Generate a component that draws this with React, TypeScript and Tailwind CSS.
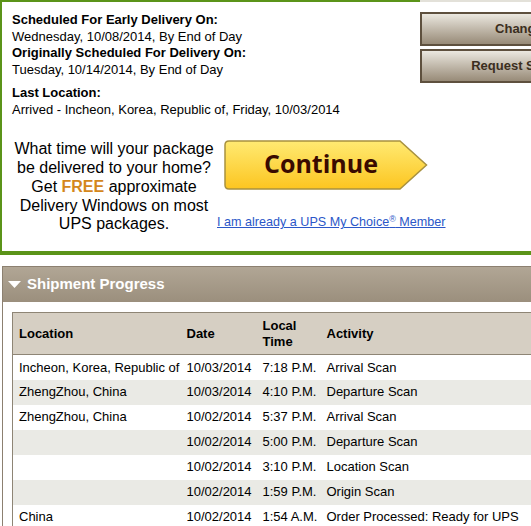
import React from 'react';

const rows = [
  ['Incheon, Korea, Republic of', '10/03/2014', '7:18 P.M.', 'Arrival Scan'],
  ['ZhengZhou, China', '10/03/2014', '4:10 P.M.', 'Departure Scan'],
  ['ZhengZhou, China', '10/02/2014', '5:37 P.M.', 'Arrival Scan'],
  ['', '10/02/2014', '5:00 P.M.', 'Departure Scan'],
  ['', '10/02/2014', '3:10 P.M.', 'Location Scan'],
  ['', '10/02/2014', '1:59 P.M.', 'Origin Scan'],
  ['China', '10/02/2014', '1:54 A.M.', 'Order Processed: Ready for UPS'],
];

const ContinueButton = () => (
  <div className="relative w-[204px] h-[50px]">
    <svg width="204" height="50" viewBox="0 0 204 50" className="absolute inset-0">
      <defs>
        <linearGradient id="cont" x1="0" y1="0" x2="0" y2="1">
          <stop offset="0" stopColor="#ffea72" />
          <stop offset="1" stopColor="#fcc520" />
        </linearGradient>
      </defs>
      <path
        d="M5 1 H176 L202.5 25 L176 49 H5 Q1 49 1 45 V5 Q1 1 5 1 Z"
        fill="url(#cont)"
        stroke="#a8913f"
        strokeWidth="1.5"
      />
    </svg>
    <span className="absolute left-[40px] top-[6px] font-['Open_Sans',sans-serif] font-bold text-[25px] leading-[34px] text-[#3a0a00]">
      Continue
    </span>
  </div>
);

export default function App() {
  return (
    <div className="w-[531px] h-[526px] overflow-hidden bg-white font-['Liberation_Sans',Arial,sans-serif] text-black">
      {/* delivery summary */}
      <div className="w-[600px] border-b-4 border-[#5b9419]">
        <div className="flex">
          <div className="w-[420px] shrink-0 border-t-2 border-l-2 border-[#5b9419] pl-[10px] pt-[10px] pb-[17px]">
            <div className="text-[13px] leading-[16.7px]">
              <div className="font-bold">Scheduled For Early Delivery On:</div>
              <div>Wednesday, 10/08/2014, By End of Day</div>
              <div className="font-bold">Originally Scheduled For Delivery On:</div>
              <div>Tuesday, 10/14/2014, By End of Day</div>
              <div className="font-bold mt-[6px]">Last Location:</div>
              <div>Arrived - Incheon, Korea, Republic of, Friday, 10/03/2014</div>
            </div>

            <div className="flex mt-[22px] -ml-[1px]">
              <div className="w-[206px] shrink-0 text-center text-[16px] leading-[18.8px]">
                What time will your package be delivered to your home? Get{' '}
                <span className="font-bold text-[#d4871c]">FREE</span> approximate Delivery Windows
                on most UPS packages.
              </div>
              <div className="flex flex-col shrink-0">
                <div className="ml-[7px]">
                  <ContinueButton />
                </div>
                <a className="mt-[23px] text-[12.6px] text-[#2b57c8] underline whitespace-nowrap">
                  I am already a UPS My Choice<sup className="text-[9px]">®</sup> Member
                </a>
              </div>
            </div>
          </div>

          <div className="flex-1 border-t-2 border-[#e3e1d9] pt-[10px] flex flex-col gap-[3px]">
            <div className="w-[252px] h-[34px] border-2 border-[#5e503e] bg-linear-to-b from-[#ebe8e0] to-[#988b78] flex items-center justify-center text-[13px] font-bold text-[#3b2e20]">
              Change Delivery
            </div>
            <div className="w-[252px] h-[34px] border-2 border-[#5e503e] bg-linear-to-b from-[#ebe8e0] to-[#988b78] flex items-center justify-center text-[13px] font-bold text-[#3b2e20]">
              Request Status Updates
            </div>
          </div>
        </div>
      </div>

      {/* shipment progress */}
      <div className="mt-[11px] ml-[2px] w-[600px] border-l border-t border-[#8c8070]">
        <div className="h-[35px] bg-linear-to-b from-[#b1a695] to-[#9b8f7d] flex items-center pl-[5px] gap-[6px]">
          <svg width="13" height="7" viewBox="0 0 13 7">
            <path d="M0 0 H13 L6.5 7 Z" fill="#fff" />
          </svg>
          <span className="text-white font-bold text-[15px]">Shipment Progress</span>
        </div>
        <div className="pt-[10px] pl-[9px]">
          <table className="w-[580px] table-fixed border-collapse border-l border-[#8e8575] text-[13px]">
            <colgroup>
              <col className="w-[168px]" />
              <col className="w-[76px]" />
              <col className="w-[64px]" />
              <col />
            </colgroup>
            <thead>
              <tr className="h-[42px] bg-[#d6cfc3] border-y border-[#8e8575] font-bold text-left">
                <th className="pl-[6px] font-bold">Location</th>
                <th className="pl-[6px] font-bold">Date</th>
                <th className="pl-[6px] font-bold leading-[16px]">
                  Local
                  <br />
                  Time
                </th>
                <th className="pl-[6px] font-bold">Activity</th>
              </tr>
            </thead>
            <tbody>
              {rows.map((r, i) => (
                <tr key={i} className={i % 2 === 1 ? 'h-[25px] bg-[#eaeae5]' : 'h-[25px] bg-white'}>
                  {r.map((c, j) => (
                    <td key={j} className="pl-[6px] whitespace-nowrap">
                      {c}
                    </td>
                  ))}
                </tr>
              ))}
            </tbody>
          </table>
        </div>
      </div>
    </div>
  );
}
